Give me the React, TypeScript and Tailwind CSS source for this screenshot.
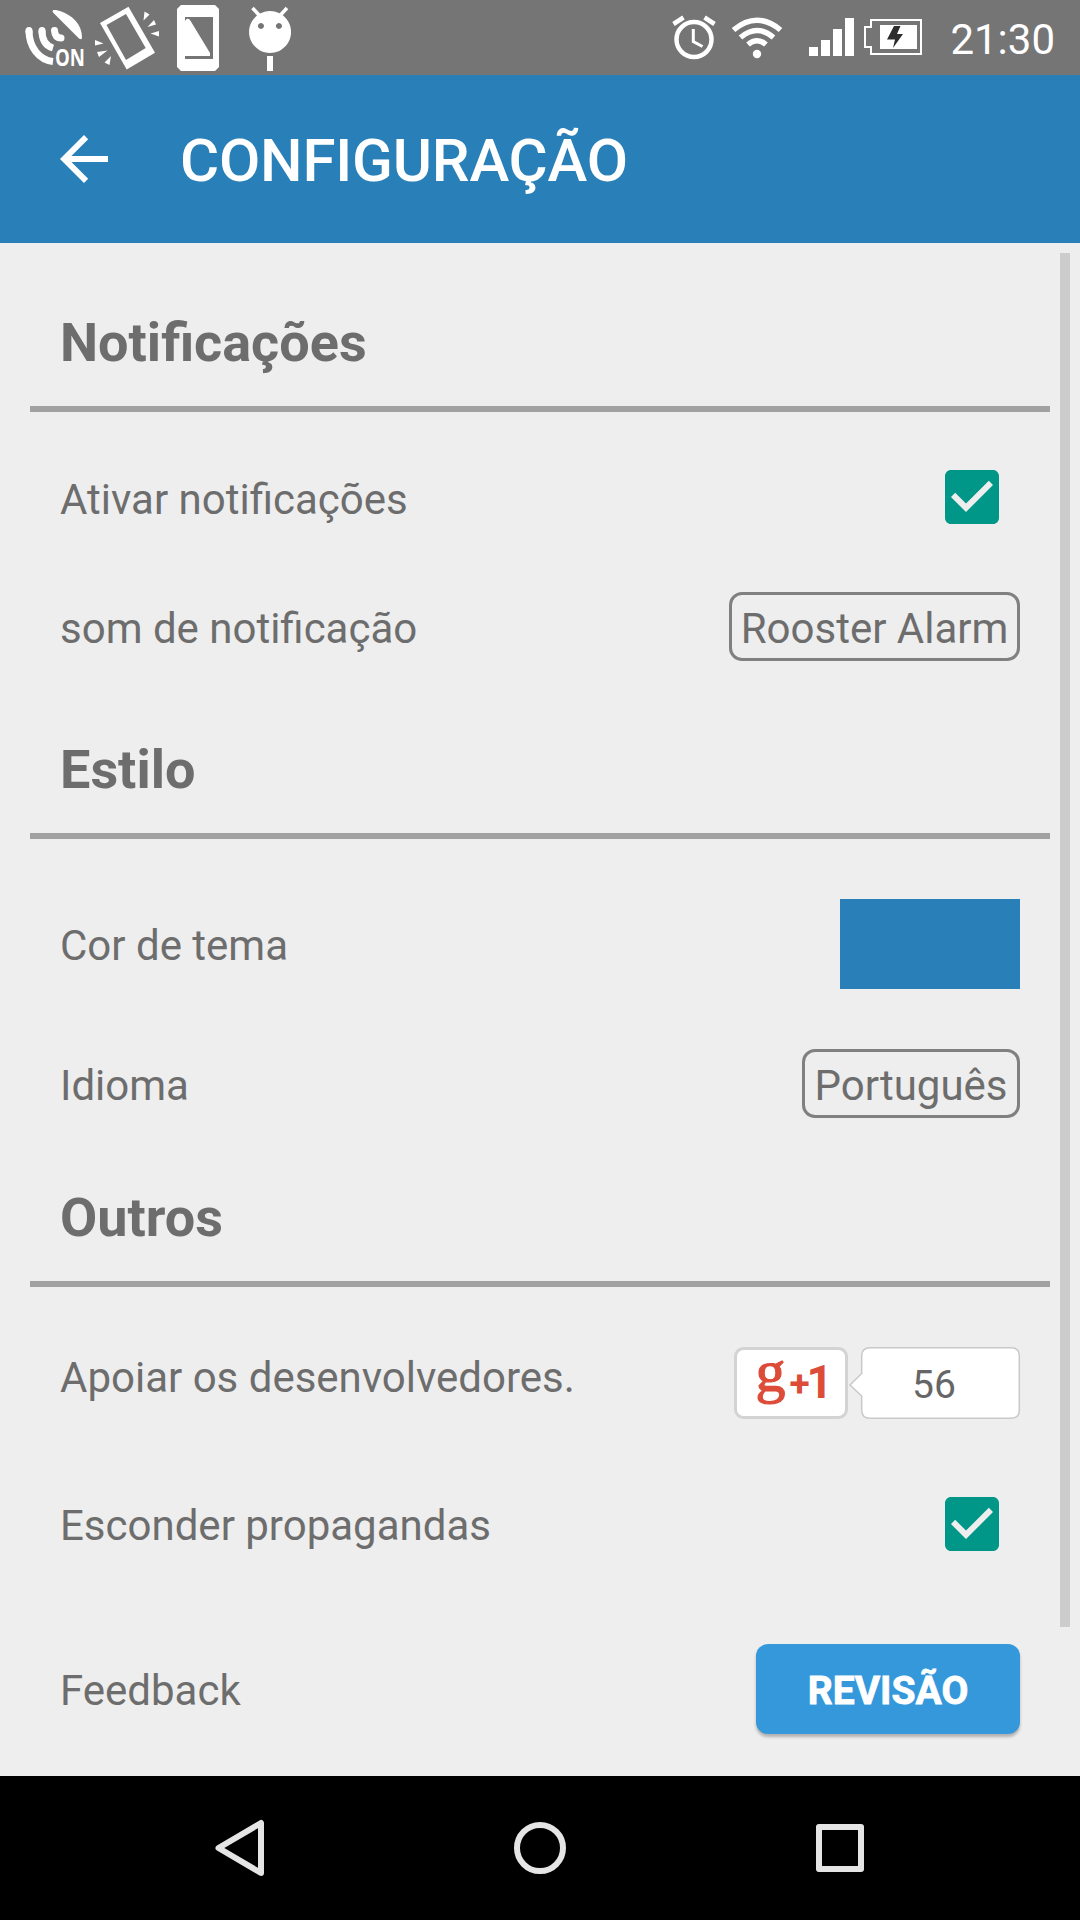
import React from 'react';

interface RowProps {
    label: string;
    className: string;
    labelClassName?: string;
    children: React.ReactNode;
}

const Section: React.FC<{ title: string; className: string }> = ({ title, className }) => (
    <div className={`mx-[30px] h-[105px] border-b-[6px] border-[#a1a1a1] pl-[30px] ${className}`}>
        <h2 className="text-[54px] leading-[72px] font-bold">{title}</h2>
    </div>
);

const Row: React.FC<RowProps> = ({ label, className, labelClassName = 'pt-1', children }) => (
    <div className={`mx-[60px] flex items-center justify-between text-[42px] leading-[54px] ${className}`}>
        <span className={labelClassName}>{label}</span>
        {children}
    </div>
);

const Checkbox: React.FC = () => (
    <svg viewBox="0 0 24 24" className="mr-3 h-[72px] w-[72px]" fill="#009688">
        <path d="M19 3H5c-1.1 0-2 .9-2 2v14c0 1.1.9 2 2 2h14c1.1 0 2-.9 2-2V5c0-1.1-.9-2-2-2zm-9 14l-5-5 1.4-1.4 3.6 3.6 7.6-7.6L19 8l-9 9z" />
    </svg>
);

const Picker: React.FC<{ value: string; className: string }> = ({ value, className }) => (
    <button className={`h-[69px] rounded-[13px] border-[3px] border-[#808080] pt-1 leading-[59px] whitespace-nowrap ${className}`}>
        {value}
    </button>
);

const StatusBar: React.FC = () => (
    <div className="flex h-[75px] items-start justify-between bg-[#757575] pr-[25px] text-white">
        <svg width="320" height="75" viewBox="0 0 320 75" fill="white">
            {/* GPS dish */}
            <path d="M52.5 11C52.5 9.5 56 9.5 60 11C72 15 82 24 82 37.5Q82 40.5 79 38.5L54 13.5Q52.5 12 52.5 11Z" />
            <g fill="none" stroke="white" strokeWidth="7">
                <path d="M29 30.5C29 47 39 60 53 61.5" />
                <path d="M42 30.5C42 40 46 46 53 48" />
                <path d="M54.500 30.500Q55 38 61 38" strokeLinecap="round" />
                <path d="M29 32V30.500M42 32V30.500" strokeLinecap="round" />
            </g>
            <text x="55" y="65.500" fontSize="23" fontWeight="700" textLength="30" lengthAdjust="spacingAndGlyphs" fontFamily="'Open Sans', sans-serif">ON</text>
            {/* Vibrating phone */}
            <path fillRule="evenodd" d="M100 23L128.500 6.700L155 52.700L126.700 69.500ZM106.500 25L126 60L145.700 48L126 14Z" />
            <path d="M144.500 11.500L149.500 14.500L143.500 20.500ZM154 20L156 24.500L147.500 27ZM159 31V36.500L150.500 33.500ZM95 40V45.500L103.500 43.500ZM97 52L99 57L107.500 50.500ZM104.500 62.500L109.500 65L111 56Z" />
            {/* Screen phone */}
            <path fillRule="evenodd" d="M181 5H215L219 9V67L215 71H181L177 67V9ZM185 17V59H213V17ZM185 56V21Q187 17 190 20L210 53V56Z" />
            {/* Android head */}
            <path fillRule="evenodd" d="M270 11a21 21 0 1 0 .1 0ZM261 23a3 3 0 1 1-.1 0ZM279 23a3 3 0 1 1-.1 0Z" />
            <path d="M252.500 8L259 15M287 8L280.500 15" stroke="white" strokeWidth="3.500" />
            <rect x="267" y="56" width="6" height="15" />
        </svg>
        <div className="flex items-start">
            <svg width="255" height="75" viewBox="670 0 255 75" fill="white">
                {/* Alarm */}
                <circle cx="694" cy="39.500" r="17.500" fill="none" stroke="white" strokeWidth="4.500" />
                <path d="M693.300 29V41.500L702.500 46.500" fill="none" stroke="white" strokeWidth="3" />
                <path d="M673.500 24L683.500 17.500M714.500 24L704.500 17.500" stroke="white" strokeWidth="4.500" />
                {/* Wi-Fi */}
                <g fill="none" stroke="white" strokeWidth="5.500">
                    <path d="M733.500 30Q757 10.500 780.500 30" />
                    <path d="M740.500 37.500Q757 23.500 773.500 37.500" />
                    <path d="M748 44.500Q757 37 766 44.500" />
                </g>
                <circle cx="757" cy="54" r="4.200" />
                {/* Signal */}
                <path d="M809 47h9v9h-9ZM821 40h9v16h-9ZM833 29h9v27h-9ZM845 18h9v38h-9Z" />
                {/* Battery */}
                <path d="M871 20H921V54H871V47H865V27H871Z" fill="none" stroke="white" strokeWidth="2" />
                <path d="M880 25H917V49H880Z" />
                <path d="M894 26H900.500L897 34H903L893 48L895 39.500H887Z" fill="#2d2d2d" />
            </svg>
            <span className="w-[130px] pt-[13px] text-right text-[42px] leading-[54px]">21:30</span>
        </div>
    </div>
);

const PlusOne: React.FC = () => (
    <svg width="286" height="72" viewBox="734 1347 286 72" className="overflow-visible">
        <rect x="735.500" y="1348.500" width="111" height="69" rx="8" fill="white" stroke="#d3d3d3" strokeWidth="3" />
        <g fill="#dd4b39">
            <text x="755.500" y="1391" fontSize="60" fontFamily="'Liberation Serif', serif" stroke="#dd4b39" strokeWidth="1.200">g</text>
            <text x="789.500" y="1395.500" fontSize="37" fontWeight="700" fontFamily="Roboto, sans-serif">+</text>
            <text x="806.500" y="1398" fontSize="46" fontWeight="700" fontFamily="Roboto, sans-serif">1</text>
        </g>
        <path d="M870 1347.700H1011Q1019.300 1347.700 1019.300 1356V1410Q1019.300 1418.300 1011 1418.300H870Q861.700 1418.300 861.700 1410V1396L850 1385L861.700 1373.500V1356Q861.700 1347.700 870 1347.700Z" fill="white" stroke="#c9c9c9" strokeWidth="1.500" />
        <text x="912" y="1398" fontSize="39" fill="#666666" fontFamily="Roboto, sans-serif">56</text>
    </svg>
);

const App: React.FC = () => (
    <div className="flex h-[1920px] w-[1080px] flex-col overflow-hidden bg-[#eeeeee] font-['Roboto',sans-serif] text-[#6d6d6d]">
        <StatusBar />

        <header className="flex h-[168px] items-center bg-[#2980b9] pl-12 text-white">
            <svg viewBox="0 0 24 24" className="h-[72px] w-[72px]" fill="currentColor">
                <path d="M20 11H7.800l5.600-5.600L12 4l-8 8 8 8 1.400-1.400L7.800 13H20v-2z" />
            </svg>
            <h1 className="ml-[60px] pt-1 text-[60px] leading-[72px] font-medium tracking-[-0.2px]">CONFIGURAÇÃO</h1>
        </header>

        <main className="flex h-[1533px]">
            <div className="w-[1080px] shrink-0">
                <Section title="Notificações" className="mt-16" />
                <Row label="Ativar notificações" className="mt-[49px] h-[72px]" labelClassName="pt-[5px]">
                    <Checkbox />
                </Row>
                <Row label="som de notificação" className="mt-[59px] h-[69px]">
                    <Picker value="Rooster Alarm" className="w-[291px]" />
                </Row>

                <Section title="Estilo" className="mt-[73px]" />
                <Row label="Cor de tema" className="mt-[60px] h-[90px]">
                    <div className="h-[90px] w-[180px] bg-[#2980b9]" />
                </Row>
                <Row label="Idioma" className="mt-[60px] h-[69px]">
                    <Picker value="Português" className="w-[218px]" />
                </Row>

                <Section title="Outros" className="mt-16" />
                <Row label="Apoiar os desenvolvedores." className="mt-[60px] h-[72px]" labelClassName="pb-[10px]">
                    <PlusOne />
                </Row>
                <Row label="Esconder propagandas" className="mt-[69px] h-[72px]">
                    <Checkbox />
                </Row>
                <Row label="Feedback" className="mt-[84px] h-[90px]">
                    <button className="h-[90px] w-[264px] rounded-xl bg-[#3498db] pt-[3px] text-[39px] font-bold text-white shadow-[0_3px_3px_rgba(0,0,0,0.25)] [-webkit-text-stroke:0.8px_white]">
                        REVISÃO
                    </button>
                </Row>
            </div>
            {/* Scroll indicator */}
            <div className="-ml-5 mt-[10px] h-[1374px] w-[10px] shrink-0 bg-[#cccccc]" />
        </main>

        <nav className="flex h-[144px] items-center justify-center gap-[228px] bg-black">
            <svg width="72" height="72" viewBox="0 0 72 72" fill="none" stroke="#e5e5e5" strokeWidth="6" strokeLinejoin="round">
                <path d="M57 11V61L14.500 36Z" />
            </svg>
            <svg width="72" height="72" viewBox="0 0 72 72" fill="none" stroke="#e5e5e5" strokeWidth="6">
                <circle cx="36" cy="36" r="23" />
            </svg>
            <svg width="72" height="72" viewBox="0 0 72 72" fill="none" stroke="#e5e5e5" strokeWidth="6" strokeLinejoin="round">
                <rect x="15" y="15" width="42" height="42" />
            </svg>
        </nav>
    </div>
);

export default App;
